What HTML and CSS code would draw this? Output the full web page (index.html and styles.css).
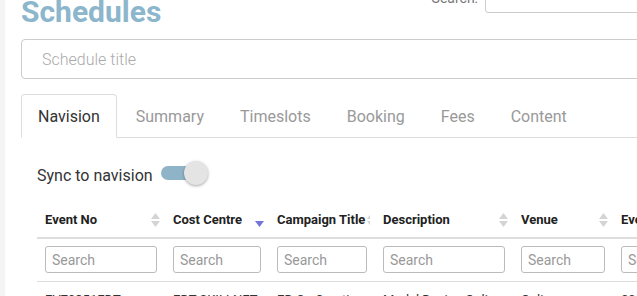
FILE: index.html
```html
<!DOCTYPE html>
<html lang="en">

<head>
    <meta charset="UTF-8">
    <meta name="viewport" content="width=device-width, initial-scale=1.0">
    <title>Schedules</title>
    <link rel="stylesheet" href="styles.css">
</head>

<body>
    <div class="layout">
        <div class="rail"></div>

        <div class="main">
            <div class="page-head">
                <h1 class="page-title">Schedules</h1>
                <label class="top-search">
                    <span>Search:</span>
                    <input type="text">
                </label>
            </div>

            <input class="title-input" type="text" placeholder="Schedule title">

            <ul class="tabs">
                <li class="tab active">Navision</li>
                <li class="tab">Summary</li>
                <li class="tab">Timeslots</li>
                <li class="tab">Booking</li>
                <li class="tab">Fees</li>
                <li class="tab">Content</li>
            </ul>

            <div class="tab-pane">
                <div class="sync">
                    <span>Sync to navision</span>
                    <div class="switch">
                        <div class="switch-track"></div>
                        <div class="switch-knob"></div>
                    </div>
                </div>

                <table class="events">
                    <colgroup>
                        <col class="c-no">
                        <col class="c-cost">
                        <col class="c-camp">
                        <col class="c-desc">
                        <col class="c-venue">
                        <col class="c-date">
                    </colgroup>
                    <thead>
                        <tr>
                            <th><div class="th-in">Event No <svg class="sort" viewBox="0 0 9 14"><polygon points="4.5,0 9,6 0,6"/><polygon points="0,8 9,8 4.5,14"/></svg></div></th>
                            <th><div class="th-in">Cost Centre <svg class="sort desc" viewBox="0 0 9 14"><polygon points="0,8 9,8 4.5,14"/></svg></div></th>
                            <th><div class="th-in">Campaign Title <svg class="sort" viewBox="0 0 9 14"><polygon points="4.5,0 9,6 0,6"/><polygon points="0,8 9,8 4.5,14"/></svg></div></th>
                            <th><div class="th-in">Description <svg class="sort" viewBox="0 0 9 14"><polygon points="4.5,0 9,6 0,6"/><polygon points="0,8 9,8 4.5,14"/></svg></div></th>
                            <th><div class="th-in">Venue <svg class="sort" viewBox="0 0 9 14"><polygon points="4.5,0 9,6 0,6"/><polygon points="0,8 9,8 4.5,14"/></svg></div></th>
                            <th><div class="th-in">Event Date <svg class="sort" viewBox="0 0 9 14"><polygon points="4.5,0 9,6 0,6"/><polygon points="0,8 9,8 4.5,14"/></svg></div></th>
                        </tr>
                        <tr class="filters">
                            <td><input type="text" placeholder="Search"></td>
                            <td><input type="text" placeholder="Search"></td>
                            <td><input type="text" placeholder="Search"></td>
                            <td><input type="text" placeholder="Search"></td>
                            <td><input type="text" placeholder="Search"></td>
                            <td><input type="text" placeholder="Search"></td>
                        </tr>
                    </thead>
                    <tbody>
                        <tr>
                            <td>EV70351EDT</td>
                            <td>EDT SKILLNET</td>
                            <td>ED Co Creation</td>
                            <td>Model Design Online</td>
                            <td>Online</td>
                            <td>2021-03-04</td>
                        </tr>
                    </tbody>
                </table>
            </div>
        </div>
    </div>
</body>

</html>
```

FILE: styles.css
```css
html,
body {
    margin: 0;
    overflow: hidden;
    background-color: white;
    font-family: Roboto, "Liberation Sans", sans-serif;
    color: #333;
}

.layout {
    display: flex;
    min-height: 100vh;
}

.rail {
    width: 5px;
    flex-shrink: 0;
    background-color: #f4f4f4;
}

.main {
    flex-shrink: 0;
    width: 664px;
    padding-left: 16px;
}

.page-head {
    display: flex;
    justify-content: space-between;
    align-items: flex-start;
    margin-top: -6px;
}

.page-title {
    margin: 0;
    font-size: 30px;
    line-height: 36px;
    font-weight: 700;
    color: #8cb6cb;
}

.top-search {
    display: flex;
    align-items: center;
    gap: 7px;
    margin-top: -11px;
    font-size: 14px;
    color: #777;
}

.top-search input {
    width: 200px;
    height: 30px;
    box-sizing: border-box;
    border: 1px solid #ccc;
    border-radius: 3px;
}

.title-input {
    display: block;
    width: 100%;
    height: 40px;
    box-sizing: border-box;
    margin-top: 9px;
    padding: 0 20px;
    border: 1px solid #ccc;
    border-radius: 4px;
    font-family: inherit;
    font-size: 16px;
    font-weight: 300;
}

.title-input::placeholder {
    color: #aaa;
}

.tabs {
    display: flex;
    gap: 2px;
    margin: 15px 0 0;
    padding: 0;
    list-style: none;
    border-bottom: 1px solid #ddd;
}

.tab {
    height: 44px;
    box-sizing: border-box;
    margin-bottom: -1px;
    padding: 0 16px;
    border: 1px solid transparent;
    border-radius: 4px 4px 0 0;
    display: flex;
    align-items: center;
    font-size: 16px;
    color: #999;
}

.tab.active {
    border-color: #ddd;
    border-bottom-color: white;
    color: #333;
}

.tab-pane {
    padding-left: 16px;
}

.sync {
    display: flex;
    align-items: center;
    gap: 8px;
    margin-top: 26px;
    font-size: 16px;
    line-height: 24px;
}

.switch {
    display: flex;
    align-items: center;
    margin-top: -7px;
}

.switch-track {
    width: 40px;
    height: 14px;
    border-radius: 7px;
    background-color: #8fb4c8;
}

.switch-knob {
    width: 24px;
    height: 24px;
    margin-left: -17px;
    border-radius: 50%;
    background-color: #e4e4e4;
    box-shadow: 0 1px 3px rgba(0, 0, 0, 0.35);
}

.events {
    margin-top: 15px;
    border-collapse: collapse;
    table-layout: fixed;
    width: 680px;
    font-size: 13px;
}

.c-no { width: 128px; }
.c-cost { width: 104px; }
.c-camp { width: 106px; }
.c-desc { width: 138px; }
.c-venue { width: 100px; }
.c-date { width: 104px; }

.events th {
    padding: 8px 5px 8px 8px;
    text-align: left;
    font-weight: 700;
    line-height: 18px;
    color: #222;
    white-space: nowrap;
    border-bottom: 2px solid #ddd;
}

.th-in {
    display: flex;
    justify-content: space-between;
    align-items: center;
    overflow: hidden;
}

.sort {
    width: 9px;
    height: 14px;
    flex-shrink: 0;
    margin-left: 2px;
    fill: #d4d4d4;
}

.sort.desc {
    fill: #7575d9;
}

.filters td {
    padding: 7px 8px 8px;
    border-bottom: 1px solid #ddd;
}

.filters input {
    display: block;
    width: 100%;
    height: 27px;
    box-sizing: border-box;
    padding: 0 6px;
    border: 1px solid #bbb;
    border-radius: 3px;
    font-family: inherit;
    font-size: 14px;
}

.filters input::placeholder {
    color: #999;
}

.events tbody td {
    padding: 9px 8px 8px;
    line-height: 18px;
    white-space: nowrap;
    overflow: hidden;
    color: #333;
}
```
